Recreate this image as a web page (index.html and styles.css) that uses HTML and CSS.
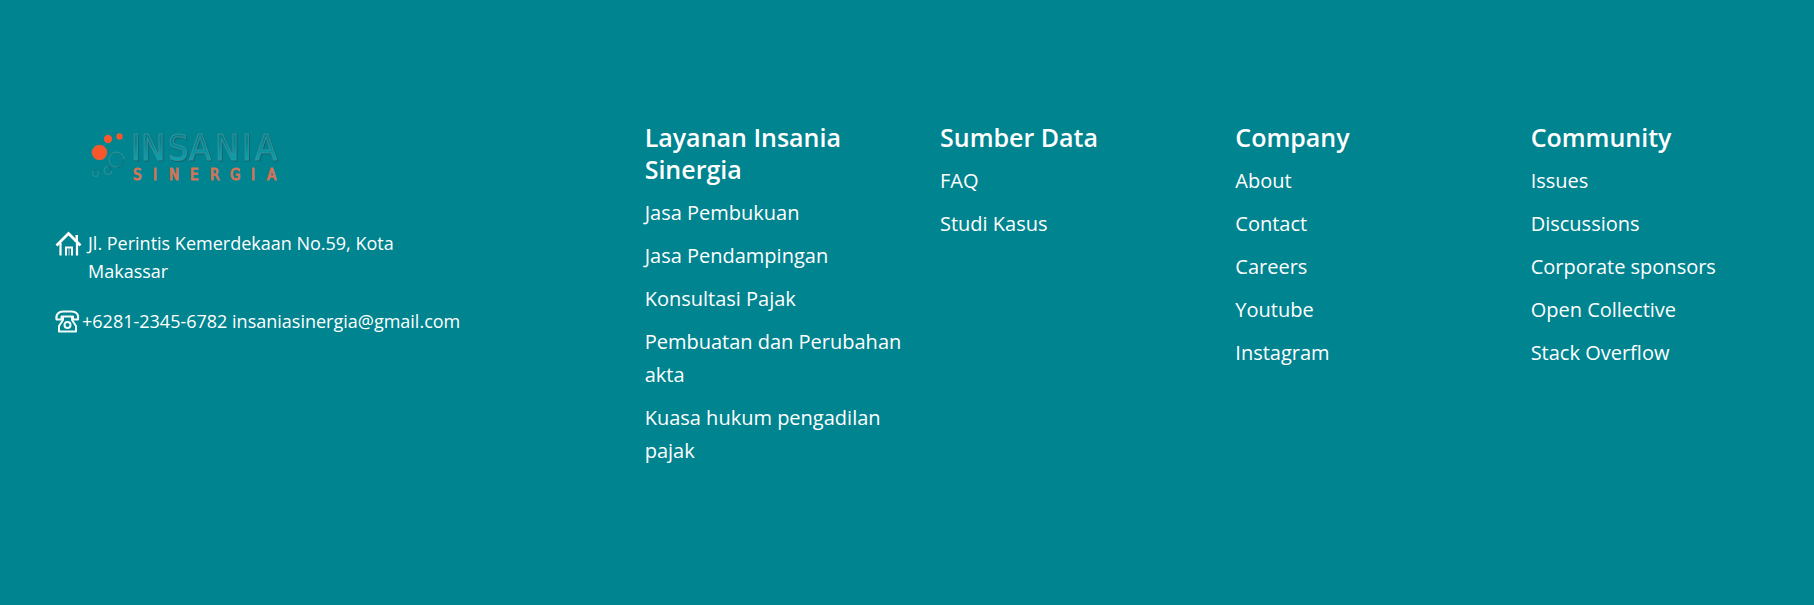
FILE: index.html
```html
<!DOCTYPE html>
<html lang="id">
<head>
<meta charset="utf-8">
<meta name="viewport" content="width=device-width, initial-scale=1">
<title>Insania Sinergia</title>
<link rel="stylesheet" href="styles.css">
</head>
<body>
<footer class="footer">
  <section class="brand">
    <svg class="logo" viewBox="0 0 210 70" role="img" aria-label="Insania Sinergia">
      <defs>
        <linearGradient id="face" gradientUnits="userSpaceOnUse" x1="0" y1="13" x2="0" y2="40">
          <stop offset="0.3" stop-color="#008490"/>
          <stop offset="1" stop-color="#00a6b5"/>
        </linearGradient>
        <radialGradient id="ball">
          <stop offset="0.7" stop-color="#f9562a"/>
          <stop offset="1" stop-color="#d9603c"/>
        </radialGradient>
      </defs>
      <g fill="url(#ball)">
        <circle cx="19.500" cy="32.500" r="7.800"/>
        <circle cx="28" cy="19" r="4.200"/>
        <circle cx="39.500" cy="16.500" r="3.200"/>
      </g>
      <g fill="none" stroke-width="1">
        <g stroke="#3b8f98">
          <circle cx="36.500" cy="39.500" r="7.500"/>
          <circle cx="28" cy="50.500" r="4"/>
          <circle cx="15.500" cy="53.500" r="3"/>
        </g>
        <g stroke="#0a6974">
          <path d="M37 47.500a8 8 0 0 0 7-8M28 46.500a4 4 0 0 1 4 4M14 51a3 3 0 0 1 3 0"/>
        </g>
      </g>
      <text class="logo-name" x="51 61 88 109 135 162 175" y="40">INSANIA</text>
      <text class="logo-sub" x="53 73 89 110 130 150 171 187" y="60">SINERGIA</text>
    </svg>
    <address class="contact">
      <p class="contact-row contact-place">
        <svg class="icon" viewBox="0 0 24 24" aria-hidden="true">
          <g fill="none" stroke="#fff">
            <path d="M0.500 13.500L12.500 1.500 24.500 13.500" stroke-width="2.800"/>
            <path d="M4.500 11v12.500M21 11v12.500" stroke-width="2.200"/>
            <path d="M10 23.500V15.500h6v8" stroke-width="2"/>
            <path d="M13 16v7.500" stroke="#a9d5d9" stroke-width="1"/>
          </g>
          <path d="M19.500 3h2.500v7.500l-2.500-2.500z" fill="#fff"/>
        </svg>
        <span>Jl. Perintis Kemerdekaan No.59, Kota Makassar</span>
      </p>
      <p class="contact-row">
        <svg class="icon" viewBox="0 0 24 24" aria-hidden="true">
          <g fill="none" stroke="#f2fafa" stroke-width="2" stroke-linejoin="round">
            <path d="M6.500 6.500v3H1.500C.5 4 4 1.500 8 1.500h8.500C21 1.500 24 4 23 9.500h-5v-3z"/>
            <path d="M8 7v3l-4 6v5.500h17V16l-4-6V7"/>
            <circle cx="12.500" cy="15" r="3"/>
          </g>
        </svg>
        <span>+6281-2345-6782 insaniasinergia@gmail.com</span>
      </p>
    </address>
  </section>
  <nav class="links" aria-labelledby="layanan">
    <h2 class="title" id="layanan">Layanan Insania Sinergia</h2>
    <ul class="list">
      <li><a href="#">Jasa Pembukuan</a></li>
      <li><a href="#">Jasa Pendampingan</a></li>
      <li><a href="#">Konsultasi Pajak</a></li>
      <li><a href="#">Pembuatan dan Perubahan akta</a></li>
      <li><a href="#">Kuasa hukum pengadilan pajak</a></li>
    </ul>
  </nav>
  <nav class="links" aria-labelledby="sumber">
    <h2 class="title" id="sumber">Sumber Data</h2>
    <ul class="list">
      <li><a href="#">FAQ</a></li>
      <li><a href="#">Studi Kasus</a></li>
    </ul>
  </nav>
  <nav class="links" aria-labelledby="company">
    <h2 class="title" id="company">Company</h2>
    <ul class="list">
      <li><a href="#">About</a></li>
      <li><a href="#">Contact</a></li>
      <li><a href="#">Careers</a></li>
      <li><a href="#">Youtube</a></li>
      <li><a href="#">Instagram</a></li>
    </ul>
  </nav>
  <nav class="links" aria-labelledby="community">
    <h2 class="title" id="community">Community</h2>
    <ul class="list">
      <li><a href="#">Issues</a></li>
      <li><a href="#">Discussions</a></li>
      <li><a href="#">Corporate sponsors</a></li>
      <li><a href="#">Open Collective</a></li>
      <li><a href="#">Stack Overflow</a></li>
    </ul>
  </nav>
</footer>
</body>
</html>
```
FILE: styles.css
```css
* { box-sizing: border-box; }
body {
  margin: 0;
  background: #008490;
  color: #fff;
  font-family: "Segoe UI", "Open Sans", "Noto Sans", sans-serif;
}
.footer {
  display: grid;
  grid-template-columns: 2fr repeat(4, 1fr);
  align-items: start;
  min-height: 100vh;
  padding: 120px 0 120px 42px;
}
.brand { padding: 0 13px; }
.logo {
  display: block;
  width: 210px;
  height: 70px;
  margin-left: 25px;
}
.logo-name {
  font: 36px "DejaVu Sans Condensed", "Liberation Sans", sans-serif;
  fill: url(#face);
  stroke: #3b8f98;
  stroke-width: 1px;
  filter: drop-shadow(1px 1px 0 #0a6974);
}
.logo-sub {
  font: 15px "DejaVu Sans Condensed", "Liberation Sans", sans-serif;
  fill: #e07a5c;
  stroke: #cf7458;
  stroke-width: 1px;
}
.contact {
  margin-top: 39px;
  font-size: 18px;
  line-height: 28px;
  font-style: normal;
}
.contact-row {
  display: flex;
  gap: 3px;
  margin: 0 0 22px;
}
.contact-place {
  gap: 8px;
  max-width: 360px;
  padding-left: 1px;
}
.icon {
  flex: none;
  width: 24px;
  height: 24px;
  margin-top: 3px;
  overflow: visible;
}
.links { padding: 0 12px; }
.title {
  margin: 1px 0 11px;
  font-size: 25px;
  line-height: 32px;
  font-weight: 600;
}
.list {
  display: grid;
  gap: 10px;
  margin: 0;
  padding: 0;
  list-style: none;
  font-size: 20px;
  line-height: 33px;
}
.list a { color: inherit; text-decoration: none; }
```
